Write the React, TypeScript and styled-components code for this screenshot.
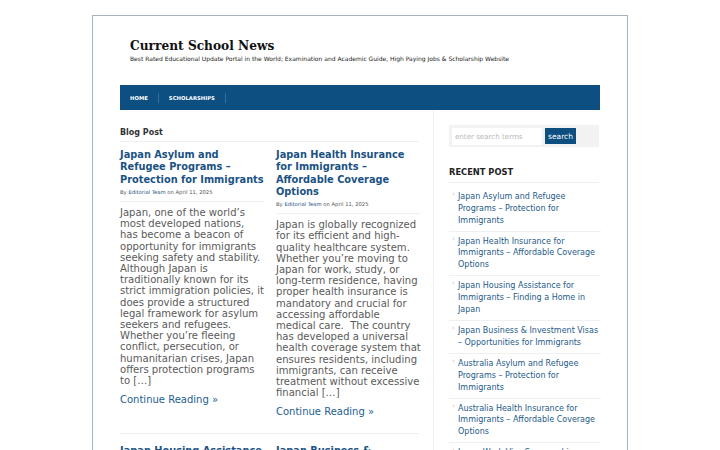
import React from "react";
import styled, { createGlobalStyle } from "styled-components";

const GlobalStyle = createGlobalStyle`
  html, body {
    margin: 0;
    padding: 0;
    background: #ffffff;
  }
  body {
    font-family: "DejaVu Sans", Verdana, sans-serif;
    color: #555;
  }
  * { box-sizing: border-box; }
`;

const Frame = styled.div`
  width: 536px;
  margin: 15px auto 0;
  border: 1px solid #a6b6c0;
  border-bottom: none;
  padding: 0 27px;
  background: #fff;
  min-height: 440px;
`;

const Header = styled.header`
  height: 69px;
  padding: 23px 0 0 10px;
`;

const SiteTitle = styled.h1`
  margin: 0;
  font-family: "DejaVu Serif", Georgia, serif;
  font-weight: bold;
  font-size: 12.2px;
  line-height: 14px;
  color: #111;
`;

const Tagline = styled.p`
  margin: 2px 0 0;
  font-size: 6px;
  line-height: 8px;
  color: #222;
  white-space: nowrap;
`;

const NavBar = styled.nav`
  height: 25px;
  background: #0c4f80;
  display: flex;
  align-items: center;
  padding-left: 10px;
`;

const NavItem = styled.a`
  font-size: 5.3px;
  font-weight: bold;
  color: #fff;
  text-decoration: none;
  padding-right: 10px;
  margin-right: 10px;
  border-right: 1px solid rgba(255, 255, 255, 0.18);
  line-height: 10px;
`;

const Main = styled.div`
  display: flex;
  align-items: stretch;
`;

const Content = styled.section`
  width: 314px;
  padding: 18px 14px 0 0;
  border-right: 1px solid #eeeeee;
  min-height: 340px;
`;

const SectionTitle = styled.h2`
  margin: 0;
  font-size: 8px;
  line-height: 10px;
  font-weight: bold;
  color: #333;
  padding-bottom: 3px;
  border-bottom: 1px solid #efefef;
`;

const PostRow = styled.div`
  display: grid;
  grid-template-columns: 145px 145px;
  column-gap: 11px;
  padding: 7px 0 15px;
  border-bottom: 1px solid #efefef;

  & + & {
    padding-top: 11px;
  }
`;

const Post = styled.article``;

const PostTitle = styled.h3`
  margin: 0;
  font-size: 9.8px;
  line-height: 12.3px;
  font-weight: bold;
  color: #1b5283;
`;

const Meta = styled.div`
  font-size: 5.25px;
  line-height: 7px;
  color: #555;
  margin-top: 3px;
  padding-bottom: 5px;
  border-bottom: 1px solid #f1f1f1;
  a { color: #1b5283; text-decoration: none; }
`;

const Excerpt = styled.p`
  margin: 5px 0 0;
  font-size: 10.05px;
  line-height: 11.2px;
  color: #5a5a5a;
`;

const ReadMore = styled.a`
  display: block;
  margin-top: 8px;
  font-size: 10px;
  line-height: 12px;
  color: #22608f;
  text-decoration: none;
`;

const Sidebar = styled.aside`
  width: 150px;
  margin-left: 15px;
  padding-top: 15px;
`;

const SearchBox = styled.form`
  display: flex;
  align-items: center;
  gap: 3px;
  height: 22px;
  padding: 0 3px;
  background: #f2f2f2;
`;

const SearchInput = styled.input`
  width: 90px;
  height: 17px;
  border: none;
  background: #fff;
  padding: 0 3px;
  font-family: "DejaVu Sans", sans-serif;
  font-size: 7.1px;
  color: #444;
  outline: none;
  &::placeholder { color: #b8b8b8; }
`;

const SearchButton = styled.button`
  height: 16px;
  width: 31px;
  border: none;
  padding: 0;
  background: #0c4f80;
  color: #fff;
  font-family: "DejaVu Sans", sans-serif;
  font-size: 7.5px;
`;

const WidgetTitle = styled.h3`
  margin: 20px 0 0;
  font-size: 8.3px;
  line-height: 10px;
  font-weight: bold;
  color: #222;
  padding-bottom: 5px;
  border-bottom: 1px solid #f0f0f0;
`;

const RecentList = styled.ul`
  list-style: none;
  margin: 4px 0 0;
  padding: 0;
`;

const RecentItem = styled.li`
  position: relative;
  padding: 4px 0 4.3px 9px;
  margin-right: -2px;
  border-bottom: 1px solid #f0f0f0;
  font-size: 8px;
  line-height: 11.8px;
  &::before {
    content: "›";
    position: absolute;
    left: 3px;
    top: 2px;
    font-size: 7px;
    color: #e6b8c4;
  }
  a { color: #245b8a; text-decoration: none; }
`;

type PostData = { title: string; excerpt: string };

const rows: PostData[][] = [
  [
    {
      title: "Japan Asylum and Refugee Programs – Protection for Immigrants",
      excerpt:
        "Japan, one of the world’s most developed nations, has become a beacon of opportunity for immigrants seeking safety and stability. Although Japan is traditionally known for its strict immigration policies, it does provide a structured legal framework for asylum seekers and refugees. Whether you’re fleeing conflict, persecution, or humanitarian crises, Japan offers protection programs to […]",
    },
    {
      title: "Japan Health Insurance for Immigrants – Affordable Coverage Options",
      excerpt:
        "Japan is globally recognized for its efficient and high-quality healthcare system. Whether you’re moving to Japan for work, study, or long-term residence, having proper health insurance is mandatory and crucial for accessing affordable medical care.\u00a0 The country has developed a universal health coverage system that ensures residents, including immigrants, can receive treatment without excessive financial […]",
    },
  ],
  [
    {
      title: "Japan Housing Assistance for Immigrants – Finding a Home in Japan",
      excerpt:
        "Relocating to a new country comes with many challenges, and one of the most important is finding suitable housing.",
    },
    {
      title: "Japan Business & Investment Visas – Opportunities for Immigrants",
      excerpt:
        "Japan is one of the world’s largest economies and offers a stable environment for entrepreneurs and investors.",
    },
  ],
];

const recent = [
  "Japan Asylum and Refugee Programs – Protection for Immigrants",
  "Japan Health Insurance for Immigrants – Affordable Coverage Options",
  "Japan Housing Assistance for Immigrants – Finding a Home in Japan",
  "Japan Business & Investment Visas – Opportunities for Immigrants",
  "Australia Asylum and Refugee Programs – Protection for Immigrants",
  "Australia Health Insurance for Immigrants – Affordable Coverage Options",
  "Japan Work Visa Sponsorship Programs – Jobs for Immigrants",
];

export default function App() {
  return (
    <>
      <GlobalStyle />
      <Frame>
        <Header>
          <SiteTitle>Current School News</SiteTitle>
          <Tagline>
            Best Rated Educational Update Portal in the World; Examination and Academic Guide, High Paying Jobs &amp; Scholarship Website
          </Tagline>
        </Header>
        <NavBar>
          <NavItem href="#">HOME</NavItem>
          <NavItem href="#">SCHOLARSHIPS</NavItem>
        </NavBar>
        <Main>
          <Content>
            <SectionTitle>Blog Post</SectionTitle>
            {rows.map((row, i) => (
              <PostRow key={i}>
                {row.map((p) => (
                  <Post key={p.title}>
                    <PostTitle>{p.title}</PostTitle>
                    <Meta>
                      By <a href="#">Editorial Team</a> on April 11, 2025
                    </Meta>
                    <Excerpt>{p.excerpt}</Excerpt>
                    <ReadMore href="#">Continue Reading »</ReadMore>
                  </Post>
                ))}
              </PostRow>
            ))}
          </Content>
          <Sidebar>
            <SearchBox onSubmit={(e) => e.preventDefault()}>
              <SearchInput placeholder="enter search terms" />
              <SearchButton type="submit">search</SearchButton>
            </SearchBox>
            <WidgetTitle>RECENT POST</WidgetTitle>
            <RecentList>
              {recent.map((r) => (
                <RecentItem key={r}>
                  <a href="#">{r}</a>
                </RecentItem>
              ))}
            </RecentList>
          </Sidebar>
        </Main>
      </Frame>
    </>
  );
}
